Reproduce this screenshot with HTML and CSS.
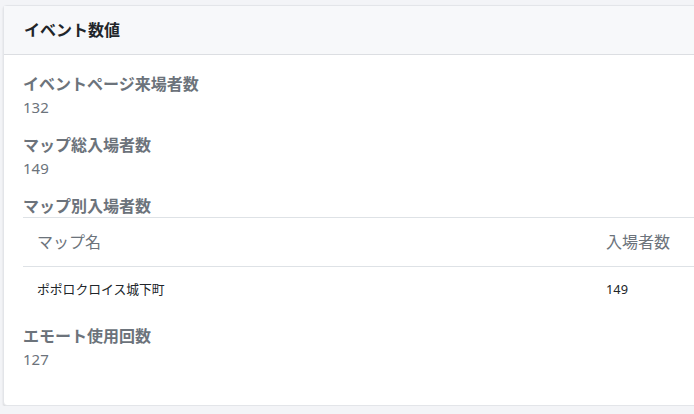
FILE: index.html
```html
<!DOCTYPE html>
<html lang="ja">
<head>
    <meta charset="UTF-8">
    <title>イベント数値</title>
    <link rel="stylesheet" href="styles.css">
</head>
<body>

<div class="card">
    <div class="card-header">イベント数値</div>
    <div class="card-body">

        <div class="stat">
            <h6 class="stat-label">イベントページ来場者数</h6>
            <div class="stat-value">132</div>
        </div>

        <div class="stat">
            <h6 class="stat-label">マップ総入場者数</h6>
            <div class="stat-value">149</div>
        </div>

        <div class="stat">
            <h6 class="stat-label flush">マップ別入場者数</h6>
            <table class="map-table">
                <thead>
                    <tr>
                        <th class="col-name">マップ名</th>
                        <th>入場者数</th>
                    </tr>
                </thead>
                <tbody>
                    <tr>
                        <td>ポポロクロイス城下町</td>
                        <td>149</td>
                    </tr>
                </tbody>
            </table>
        </div>

        <div class="stat">
            <h6 class="stat-label">エモート使用回数</h6>
            <div class="stat-value">127</div>
        </div>

    </div>
</div>

</body>
</html>
```

FILE: styles.css
```css
body {
    margin: 0;
    padding: 5px 0 0 3px;
    background-color: #f3f4f7;
    font-family: "Noto Sans", "Noto Sans CJK JP", sans-serif;
    color: #212529;
    overflow: hidden;
}
.card {
    width: 820px;
    background-color: white;
    border: 1px solid #e3e5e9;
    border-radius: 4px;
    box-shadow: 0 1px 2px rgba(0, 0, 0, 0.12);
}
.card-header {
    background-color: #f7f8fa;
    border-bottom: 1px solid #dcdee2;
    padding: 12px 20px;
    font-size: 16px;
    font-weight: bold;
    line-height: 24px;
}
.card-body {
    padding: 20px 20px 17px 19px;
}
.stat {
    margin-bottom: 17.5px;
}
.stat-label {
    margin: 0 0 2px;
    font-size: 16px;
    line-height: 1.2;
    font-weight: bold;
    color: #6c737b;
}
.stat-label.flush {
    margin-bottom: 0;
}
.stat-value {
    font-size: 15px;
    line-height: 1.5;
    color: #6c737b;
}
.map-table {
    width: 100%;
    table-layout: fixed;
    border-collapse: collapse;
    margin-bottom: -1px;
}
.map-table th {
    text-align: left;
    font-weight: normal;
    font-size: 16px;
    line-height: 24px;
    color: #6c737b;
    padding: 12px 14px;
    border-top: 1px solid #dee2e6;
    border-bottom: 1px solid #dee2e6;
}
.map-table .col-name {
    width: 569px;
    box-sizing: border-box;
}
.map-table td {
    font-size: 12.8px;
    line-height: 20px;
    padding: 12px 14px;
    color: #212529;
}
```
